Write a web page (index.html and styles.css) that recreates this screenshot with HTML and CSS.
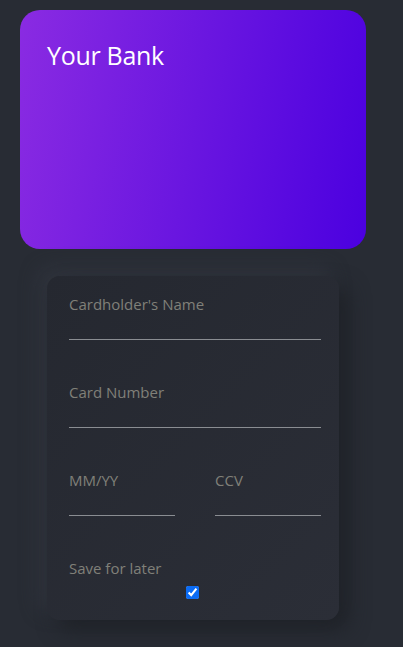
FILE: index.html
```html
<!DOCTYPE html>
<html>
<head>
<meta charset="utf-8">
<link rel="stylesheet" href="styles.css">
</head>
<body>
<div class="page">
  <div class="bank-card">
    <div class="bank-name">Your Bank</div>
  </div>
  <form class="form-panel">
    <label class="field">
      <span class="label">Cardholder's Name</span>
      <input class="line" type="text">
    </label>
    <label class="field">
      <span class="label">Card Number</span>
      <input class="line" type="text">
    </label>
    <div class="row">
      <label class="field half">
        <span class="label">MM/YY</span>
        <input class="line" type="text">
      </label>
      <label class="field half">
        <span class="label">CCV</span>
        <input class="line" type="text">
      </label>
    </div>
    <div class="save">
      <span class="label">Save for later</span>
      <input class="check" type="checkbox" checked>
    </div>
  </form>
</div>
</body>
</html>
```

FILE: styles.css
```css
html, body {
  margin: 0;
  padding: 0;
  background: #282c34;
  height: 100%;
}
body {
  font-family: "Open Sans", "Noto Sans", sans-serif;
}
.page {
  display: flex;
  flex-direction: column;
  padding: 10px 0 0 20px;
}
.bank-card {
  width: 346px;
  height: 239px;
  box-sizing: border-box;
  border-radius: 20px;
  background: linear-gradient(100deg, #8a2be2 0%, #6a16e0 50%, #4b00e0 100%);
  padding: 33px 27px;
}
.bank-name {
  color: #ffffff;
  font-size: 25px;
  line-height: 1;
  letter-spacing: -0.3px;
}
.form-panel {
  margin: 27px 0 0 27px;
  width: 292px;
  height: 344px;
  box-sizing: border-box;
  border-radius: 13px;
  background: linear-gradient(135deg, #252830 0%, #2b2e37 100%);
  box-shadow: 10px 10px 20px #1f2228, -8px -8px 18px #30343d;
  padding: 17px 18px 0 22px;
  display: flex;
  flex-direction: column;
}
.field {
  display: flex;
  flex-direction: column;
  width: 252px;
  margin-bottom: 41px;
}
.label {
  color: #808079;
  font-size: 15px;
  line-height: 22px;
}
.line {
  margin: 24px 0 0;
  padding: 0;
  height: 1px;
  border: none;
  border-bottom: 1px solid #8a8d92;
  background: transparent;
  outline: none;
  box-sizing: border-box;
}
.row {
  display: flex;
  gap: 40px;
  width: 252px;
}
.field.half {
  width: 106px;
}
.save {
  display: flex;
  flex-direction: column;
  width: 252px;
}
.check {
  margin: 7px 0 0 117px;
  width: 13px;
  height: 13px;
  accent-color: #0b6cf5;
}
```
